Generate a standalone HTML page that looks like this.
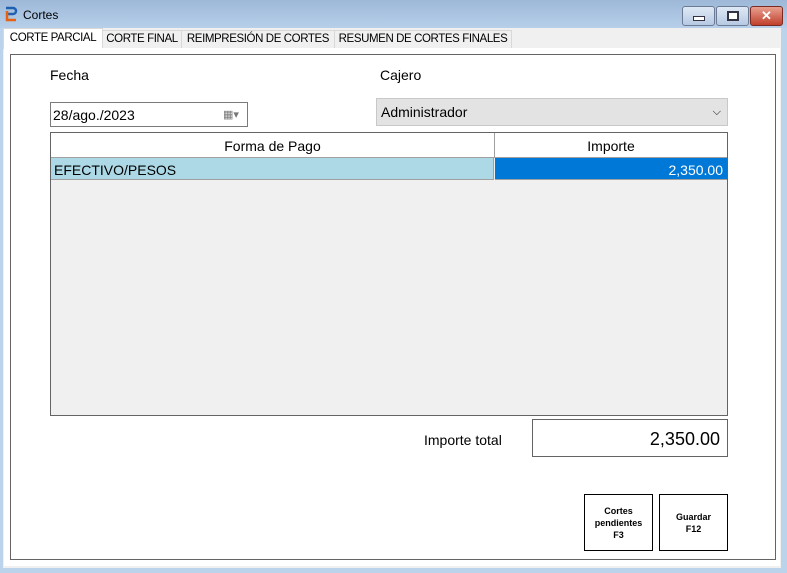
<!DOCTYPE html>
<html><head><style>
body{margin:0;width:787px;height:573px;overflow:hidden;font-family:"Liberation Sans",sans-serif;background:#bcd3ec;position:relative}
.a{position:absolute}
.t{white-space:nowrap;font-size:11.5px;letter-spacing:-0.4px;overflow:hidden}
</style></head><body>
<div class="a" style="left:0;top:0;width:787px;height:28px;background:linear-gradient(#9db8d8,#b7cfe9)"></div>
<div class="a" style="left:4px;top:6px;width:14px;height:16px">
<svg width="14" height="16"><path d="M2 2h7a3 3 0 0 1 0 6H4" stroke="#2060b0" stroke-width="2.5" fill="none"/><path d="M3 5v9h9" stroke="#e86010" stroke-width="2.5" fill="none"/></svg></div>
<div class="a" style="left:23px;top:8px;font-size:12px;color:#000">Cortes</div>
<div class="a" style="left:682px;top:6px;width:31px;height:18px;border:1px solid #6b7b95;border-radius:3px;background:linear-gradient(#dfe9f5,#b6c9e2)"><div class="a" style="left:10px;top:9px;width:10px;height:3px;background:#fff;border:1px solid #334"></div></div>
<div class="a" style="left:716px;top:6px;width:31px;height:18px;border:1px solid #6b7b95;border-radius:3px;background:linear-gradient(#dfe9f5,#b6c9e2)"><div class="a" style="left:10px;top:4px;width:8px;height:6px;border:2px solid #334;background:#fff"></div></div>
<div class="a" style="left:750px;top:6px;width:31px;height:18px;border:1px solid #7a2a20;border-radius:3px;background:linear-gradient(#e8a090,#c0402c);color:#fff;font-weight:bold;font-size:13px;text-align:center;line-height:18px">✕</div>
<div class="a" style="left:3px;top:28px;width:778px;height:540px;background:#f0f0f0"></div>
<div class="a t" style="left:3px;top:28px;width:98px;height:20px;background:#fff;border:1px solid #d8d8d8;border-bottom:none;line-height:18px;text-align:center">CORTE PARCIAL</div>
<div class="a t" style="left:102px;top:30px;width:78px;height:17px;background:#f0f0f0;border:1px solid #d8d8d8;line-height:17px;text-align:center">CORTE FINAL</div>
<div class="a t" style="left:181px;top:30px;width:152px;height:17px;background:#f0f0f0;border:1px solid #d8d8d8;line-height:17px;text-align:center">REIMPRESIÓN DE CORTES</div>
<div class="a t" style="left:334px;top:30px;width:176px;height:17px;background:#f0f0f0;border:1px solid #d8d8d8;line-height:17px;text-align:center">RESUMEN DE CORTES FINALES</div>
<div class="a" style="left:4px;top:48px;width:776px;height:518px;background:#fff"></div>
<div class="a" style="left:10px;top:54px;width:764px;height:504px;border:1px solid #646464;background:#fff"></div>
<div class="a" style="left:50px;top:67px;font-size:14px">Fecha</div>
<div class="a" style="left:380px;top:67px;font-size:14px">Cajero</div>
<div class="a" style="left:50px;top:102px;width:198px;height:25px;border:1px solid #7a7a7a;font-size:14px;line-height:25px;padding-left:2px;box-sizing:border-box">28/ago./2023<span style="position:absolute;left:172px;top:0;color:#777;font-size:11px">▦▾</span></div>
<div class="a" style="left:376px;top:98px;width:352px;height:28px;border:1px solid #c8c8c8;background:#e3e3e3;box-sizing:border-box;font-size:14px;line-height:26px;padding-left:4px">Administrador<span style="position:absolute;right:6px;top:0;font-size:11px">⌵</span></div>
<div class="a" style="left:50px;top:132px;width:678px;height:284px;border:1px solid #646464;background:#f0f0f0;box-sizing:border-box"></div>
<div class="a" style="left:51px;top:133px;width:443px;height:24px;background:#fff;border-right:1px solid #a0a0a0;border-bottom:1px solid #a0a0a0;font-size:14px;line-height:26px;text-align:center">Forma de Pago</div>
<div class="a" style="left:495px;top:133px;width:232px;height:24px;background:#fff;border-bottom:1px solid #a0a0a0;font-size:14px;line-height:26px;text-align:center">Importe</div>
<div class="a" style="left:51px;top:158px;width:443px;height:22px;background:#add8e6;border-right:1px solid #a0a0a0;border-bottom:1px solid #a0a0a0;font-size:14px;line-height:24px;padding-left:3px;box-sizing:border-box">EFECTIVO/PESOS</div>
<div class="a" style="left:495px;top:158px;width:232px;height:22px;background:#0078d7;color:#fff;border-bottom:1px solid #a0a0a0;font-size:14px;line-height:24px;text-align:right;padding-right:4px;box-sizing:border-box">2,350.00</div>
<div class="a" style="left:424px;top:432px;font-size:14px">Importe total</div>
<div class="a" style="left:532px;top:419px;width:196px;height:38px;border:1px solid #646464;box-sizing:border-box;font-size:18px;line-height:38px;text-align:right;padding-right:7px">2,350.00</div>
<div class="a" style="left:584px;top:494px;width:69px;height:57px;border:1px solid #000;box-sizing:border-box;font-size:9px;font-weight:bold;text-align:center;padding-top:10px;line-height:12px">Cortes<br>pendientes<br>F3</div>
<div class="a" style="left:659px;top:494px;width:69px;height:57px;border:1px solid #000;box-sizing:border-box;font-size:9px;font-weight:bold;text-align:center;padding-top:16px;line-height:12px">Guardar<br>F12</div>
</body></html>
